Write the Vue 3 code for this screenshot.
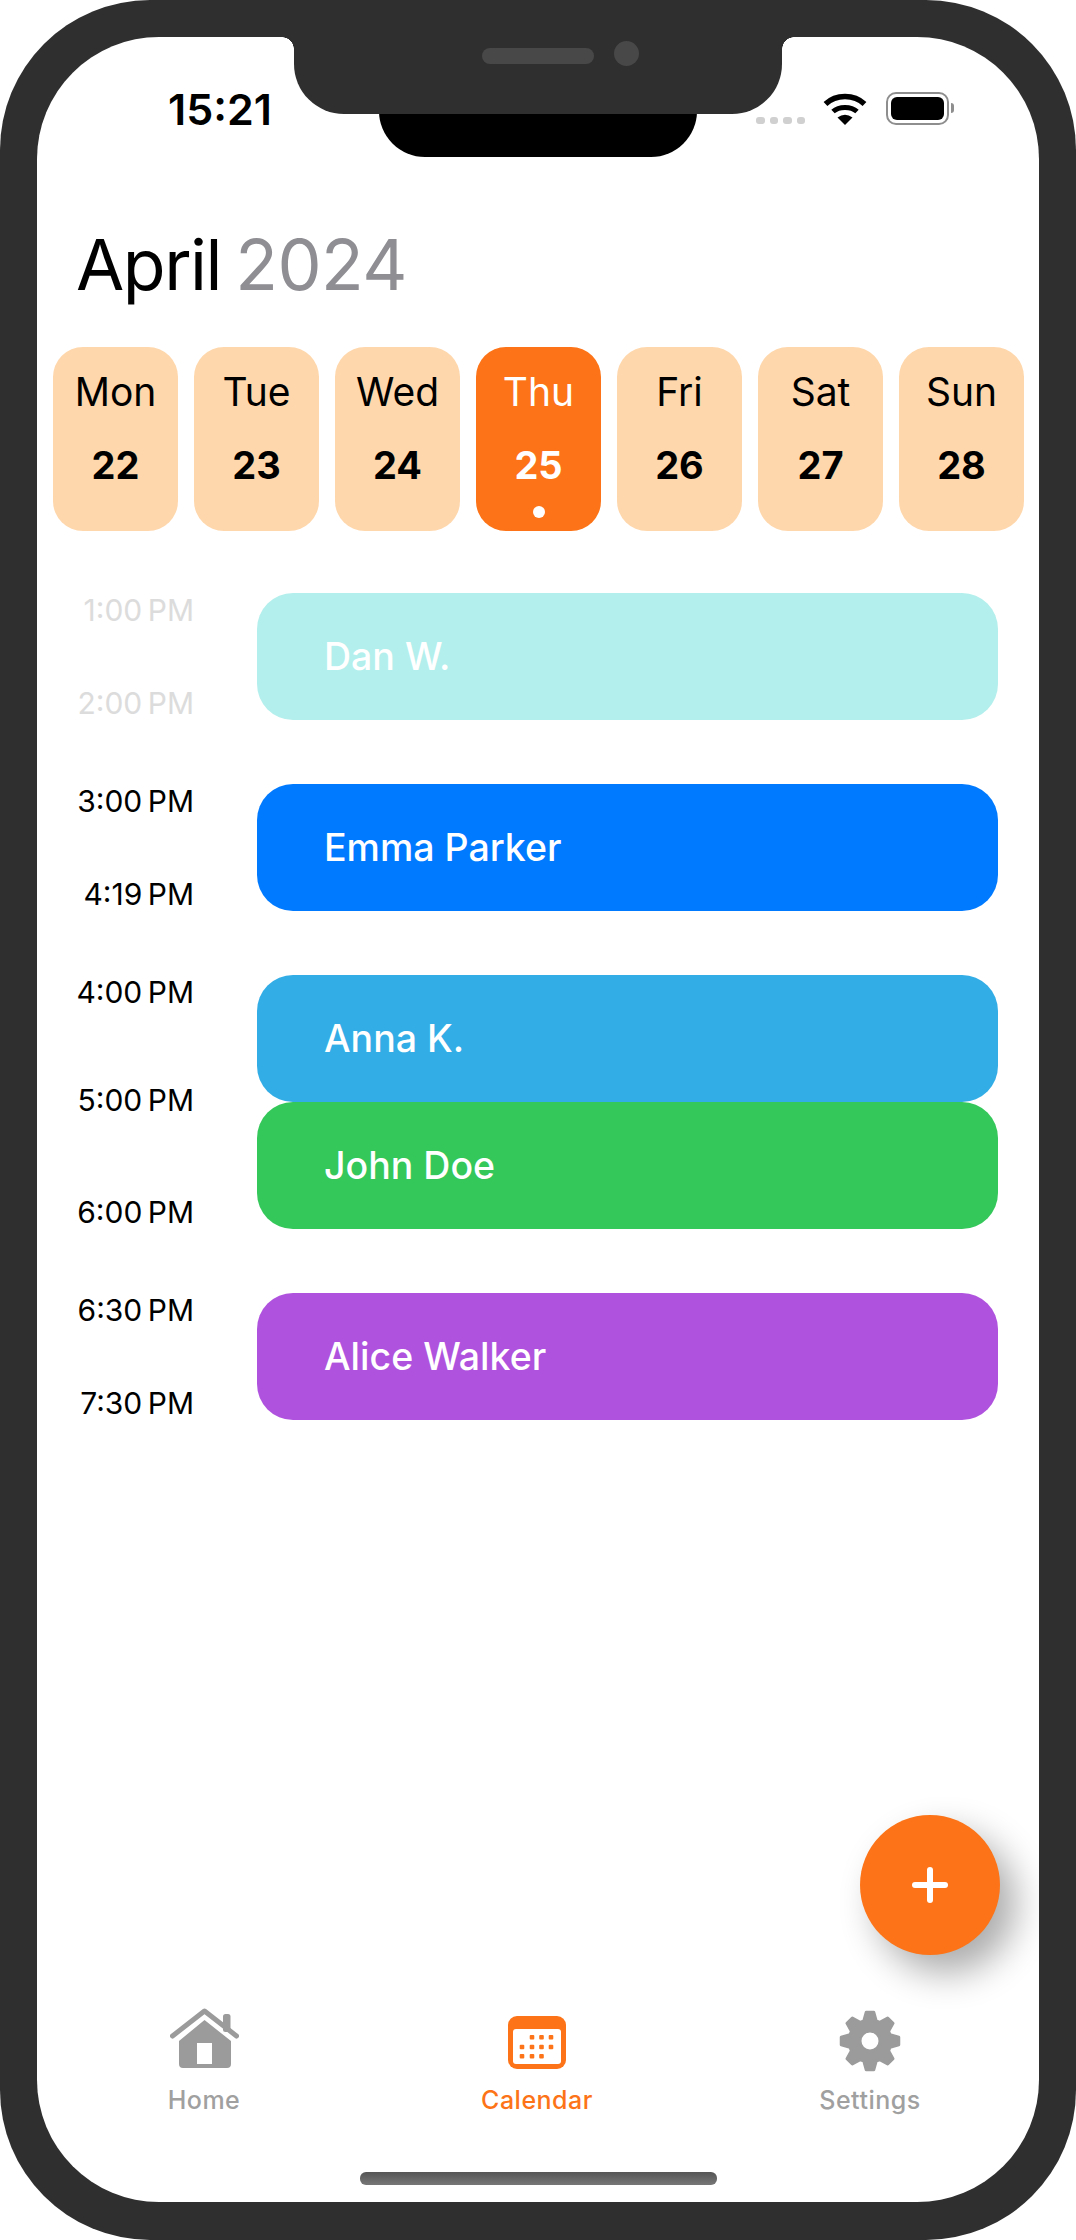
<template>
  <div class="phone">
    <div class="screen">
      <div class="island"></div>
      <div class="notch">
        <span class="speaker"></span>
        <span class="camera"></span>
      </div>

      <div class="status-bar">
        <span class="clock">15:21</span>
        <div class="status-icons">
          <div class="signal"><i v-for="n in 4" :key="n"></i></div>
          <svg class="wifi" viewBox="0 0 44 32" width="44" height="32">
            <path d="M2.5 11C13 1 31 1 41.5 11" fill="none" stroke="#000" stroke-width="5.5" />
            <path d="M10 18.5C16 13 28 13 34 18.5" fill="none" stroke="#000" stroke-width="5" />
            <path d="M14.5 24.5Q22 19 29.5 24.5L22 32Z" fill="#000" />
          </svg>
          <div class="battery"><span></span></div>
        </div>
      </div>

      <h1 class="title">April <span>2024</span></h1>

      <div class="days">
        <div v-for="day in days" :key="day.num" class="day" :class="{ active: day.active }">
          <span class="day-name">{{ day.name }}</span>
          <span class="day-num">{{ day.num }}</span>
          <span v-if="day.active" class="day-dot"></span>
        </div>
      </div>

      <div class="schedule">
        <div v-for="(group, i) in groups" :key="i" class="group" :class="{ faded: group.faded }">
          <div class="times">
            <span v-for="t in group.times" :key="t">{{ t }}</span>
          </div>
          <div class="events">
            <div v-for="ev in group.events" :key="ev.name" class="event" :style="{ background: ev.color }">
              {{ ev.name }}
            </div>
          </div>
        </div>
      </div>

      <button class="fab"><span class="plus"></span></button>

      <nav class="tabs">
        <div class="tab">
          <div class="tab-icon">
            <svg viewBox="0 0 69 61" width="69" height="61">
              <rect x="53" y="6" width="7.500" height="18" rx="2.500" fill="#9b9b9b" />
              <path d="M2.500 28 34.500 3l32 25" fill="none" stroke="#9b9b9b" stroke-width="5" stroke-linecap="round" stroke-linejoin="round" />
              <path fill-rule="evenodd" fill="#9b9b9b" d="M34.500 12 61 33v23a4 4 0 0 1-4 4H13a4 4 0 0 1-4-4V33ZM27 35v21h15V35Z" />
            </svg>
          </div>
          <span>Home</span>
        </div>
        <div class="tab current">
          <div class="tab-icon">
            <svg viewBox="0 0 58 53" width="58" height="53">
              <rect width="58" height="53" rx="9" fill="#fc7417" />
              <rect x="5" y="13" width="48" height="35" rx="3" fill="#fff" />
              <rect v-for="d in calendarDots" :key="d.x + '-' + d.y" :x="d.x" :y="d.y" width="4.600" height="4.600" rx="1" fill="#fc7417" />
            </svg>
          </div>
          <span>Calendar</span>
        </div>
        <div class="tab">
          <div class="tab-icon gear">
            <svg viewBox="0 0 62 62" width="62" height="62">
              <path :d="gearPath" fill="#9b9b9b" fill-rule="evenodd" stroke="#9b9b9b" stroke-width="3" stroke-linejoin="round" />
            </svg>
          </div>
          <span>Settings</span>
        </div>
      </nav>

      <div class="home-bar"></div>
    </div>
  </div>
</template>

<script setup>
const days = [
  { name: "Mon", num: 22 },
  { name: "Tue", num: 23 },
  { name: "Wed", num: 24 },
  { name: "Thu", num: 25, active: true },
  { name: "Fri", num: 26 },
  { name: "Sat", num: 27 },
  { name: "Sun", num: 28 },
];

const groups = [
  { faded: true, times: ["1:00 PM", "2:00 PM"], events: [{ name: "Dan W.", color: "#b3efec" }] },
  { times: ["3:00 PM", "4:19 PM"], events: [{ name: "Emma Parker", color: "#007aff" }] },
  {
    times: ["4:00 PM", "5:00 PM", "6:00 PM"],
    events: [
      { name: "Anna K.", color: "#32ade6" },
      { name: "John Doe", color: "#34c759" },
    ],
  },
  { times: ["6:30 PM", "7:30 PM"], events: [{ name: "Alice Walker", color: "#af52de" }] },
];

const cols = [14, 24, 33.5, 43];
const calendarDots = [
  ...[1, 2, 3].map((c) => ({ x: cols[c] - 2.3, y: 19 })),
  ...[0, 1, 2, 3].map((c) => ({ x: cols[c] - 2.3, y: 28.700 })),
  ...[0, 1, 2].map((c) => ({ x: cols[c] - 2.3, y: 38 })),
];

// eight teeth, one pointing straight up
const gearPath = (() => {
  const pts = [];
  const point = (r, a) => `${(31 + r * Math.sin(a)).toFixed(2)} ${(31 - r * Math.cos(a)).toFixed(2)}`;
  for (let i = 0; i < 8; i++) {
    const a = (i * Math.PI) / 4;
    pts.push(point(21, a - 0.3), point(29, a - 0.13), point(29, a + 0.13), point(21, a + 0.3));
  }
  return `M${pts.join("L")}ZM31 21a10 10 0 1 0 0 20a10 10 0 1 0 0-20Z`;
})();
</script>

<style scoped>
.phone {
  width: 1076px;
  height: 2240px;
  box-sizing: border-box;
  padding: 37px 37px 38px;
  background: #2f2f2f;
  border-radius: 150px;
  font-family: Inter, "Liberation Sans", sans-serif;
  color: #000;
}

.screen {
  position: relative;
  height: 100%;
  display: flex;
  flex-direction: column;
  background: #fff;
  border-radius: 122px;
  overflow: hidden;
}

.island {
  position: absolute;
  top: 40px;
  left: 342px;
  width: 318px;
  height: 80px;
  background: #000;
  border-radius: 0 0 46px 46px;
}

.notch {
  position: absolute;
  top: 0;
  left: 257px;
  width: 488px;
  height: 77px;
  background: #2f2f2f;
  border-radius: 0 0 50px 50px;
}

.notch::before,
.notch::after {
  content: "";
  position: absolute;
  top: 0;
  width: 12px;
  height: 12px;
}

.notch::before {
  left: -12px;
  background: radial-gradient(circle at 0 100%, transparent 11.5px, #2f2f2f 12px);
}

.notch::after {
  right: -12px;
  background: radial-gradient(circle at 100% 100%, transparent 11.5px, #2f2f2f 12px);
}

.speaker {
  position: absolute;
  top: 11px;
  left: 188px;
  width: 112px;
  height: 16px;
  border-radius: 8px;
  background: #484848;
}

.camera {
  position: absolute;
  top: 4px;
  left: 320px;
  width: 25px;
  height: 25px;
  border-radius: 50%;
  background: #484848;
}

.status-bar {
  height: 98px;
  flex-shrink: 0;
  box-sizing: border-box;
  padding: 52px 90px 0 131px;
  display: flex;
  justify-content: space-between;
  align-items: flex-start;
}

.clock {
  margin-top: -3px;
  font-size: 43px;
  line-height: 46px;
  font-weight: 600;
}

.status-icons {
  display: flex;
  align-items: flex-end;
  margin-top: 3px;
}

.signal {
  display: flex;
  gap: 5px;
  margin-bottom: 1px;
  margin-right: 18px;
}

.signal i {
  width: 8.500px;
  height: 7px;
  border-radius: 3px;
  background: #d0d0d0;
}

.wifi {
  display: block;
  margin-right: 19px;
}

.battery {
  position: relative;
  width: 63px;
  height: 33px;
  box-sizing: border-box;
  padding: 3px;
  border: 2px solid #8e8e8e;
  border-radius: 10px;
}

.battery span {
  display: block;
  height: 100%;
  background: #000;
  border-radius: 6px;
}

.battery::after {
  content: "";
  position: absolute;
  top: 9px;
  right: -7px;
  width: 3px;
  height: 10px;
  background: #8e8e8e;
  border-radius: 0 3px 3px 0;
}

.title {
  margin: 0;
  padding: 101px 0 0 39px;
  font-size: 70px;
  line-height: 58px;
  font-weight: 400;
  letter-spacing: -1.500px;
  word-spacing: -4px;
}

.title span {
  color: #8e8e93;
  letter-spacing: -0.500px;
}

.days {
  margin: 53px 0 0 16px;
  display: flex;
  gap: 16px;
}

.day {
  position: relative;
  width: 125px;
  height: 184px;
  box-sizing: border-box;
  padding-top: 22px;
  display: flex;
  flex-direction: column;
  align-items: center;
  background: #ffd7ac;
  border-radius: 30px;
}

.day-name {
  font-size: 39px;
  line-height: 46px;
}

.day-num {
  margin-top: 27px;
  font-size: 38px;
  line-height: 46px;
  font-weight: 700;
}

.day.active {
  background: #fc7417;
  color: #fff;
}

.day-dot {
  position: absolute;
  bottom: 13px;
  left: 50%;
  width: 12px;
  height: 12px;
  margin-left: -6px;
  border-radius: 50%;
  background: #fff;
}

.schedule {
  margin: 62px 0 0 0;
  display: flex;
  flex-direction: column;
  gap: 64px;
}

.group {
  display: flex;
}

.times {
  width: 157px;
  flex-shrink: 0;
  display: flex;
  flex-direction: column;
  justify-content: space-between;
  align-items: flex-end;
  font-size: 30px;
  line-height: 34px;
  word-spacing: -3px;
}

.times span:nth-child(2):nth-last-child(2) {
  margin-bottom: 5px;
}

.faded .times {
  color: #dcdcdc;
}

.events {
  margin-left: 63px;
  width: 741px;
}

.event {
  height: 127px;
  box-sizing: border-box;
  padding-left: 67px;
  display: flex;
  align-items: center;
  border-radius: 36px;
  color: #fff;
  font-size: 37.500px;
  font-weight: 500;
}

.fab {
  position: absolute;
  top: 1778px;
  left: 823px;
  width: 140px;
  height: 140px;
  padding: 0;
  border: none;
  border-radius: 50%;
  background: #fc7417;
  box-shadow: 16px 18px 36px rgba(0, 0, 0, 0.33);
}

.plus {
  position: absolute;
  top: 52px;
  left: 52px;
  width: 36px;
  height: 36px;
}

.plus::before,
.plus::after {
  content: "";
  position: absolute;
  background: #fff;
  border-radius: 3px;
}

.plus::before {
  top: 15px;
  left: 0;
  width: 36px;
  height: 6px;
}

.plus::after {
  top: 0;
  left: 15px;
  width: 6px;
  height: 36px;
}

.tabs {
  position: absolute;
  top: 1964px;
  left: 0;
  right: 0;
  display: grid;
  grid-template-columns: repeat(3, 200px);
  justify-content: space-between;
  padding: 0 69px 0 67px;
}

.tab {
  display: flex;
  flex-direction: column;
  align-items: center;
  color: #a0a0a0;
  font-size: 25px;
  line-height: 30px;
  font-weight: 500;
  letter-spacing: 0.500px;
}

.tab.current {
  color: #fc7417;
}

.tab-icon {
  height: 68px;
  display: flex;
  align-items: flex-end;
  margin-bottom: 16px;
}

.tab-icon.gear svg {
  margin-bottom: -3px;
}

.tab-icon svg {
  display: block;
}

.home-bar {
  position: absolute;
  left: 323px;
  top: 2135px;
  width: 357px;
  height: 13px;
  border-radius: 6px;
  background: linear-gradient(#555, #777);
}
</style>

<style>
body {
  background: #fff;
}
</style>
